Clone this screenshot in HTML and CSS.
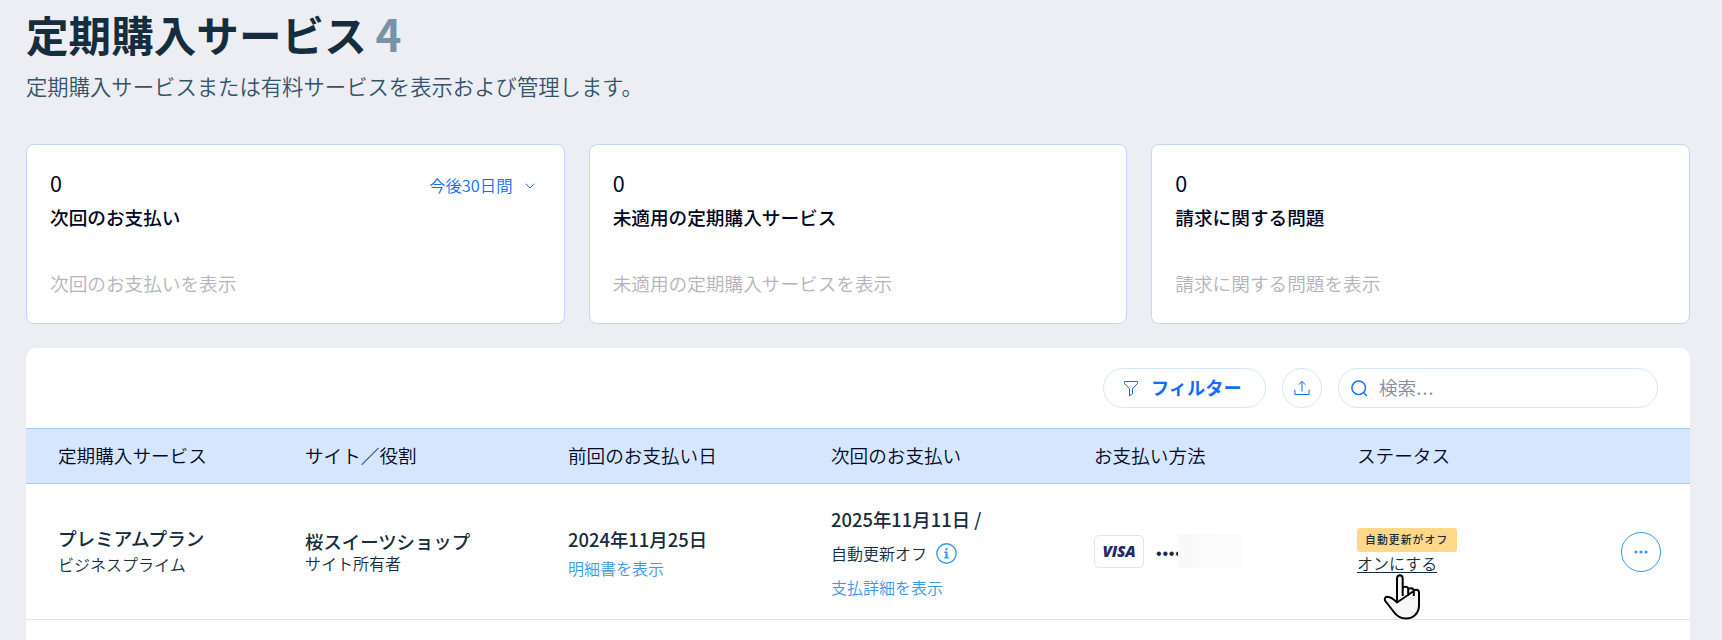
FILE: index.html
```html
<!DOCTYPE html>
<html lang="ja">
<head>
<meta charset="utf-8">
<title>定期購入サービス</title>
<link rel="stylesheet" href="styles.css">
</head>
<body>
<main class="page">
  <header class="page-header">
    <h1 class="title">定期購入サービス <span class="count">4</span></h1>
    <p class="subtitle">定期購入サービスまたは有料サービスを表示および管理します。</p>
  </header>

  <section class="cards">
    <article class="card">
      <div class="card-top">
        <span class="card-value">0</span>
        <button class="period">今後30日間
          <svg width="10" height="6" viewBox="0 0 10 6"><path d="M.7.8 5 5 9.3.8"/></svg>
        </button>
      </div>
      <h2 class="card-title">次回のお支払い</h2>
      <span class="card-link">次回のお支払いを表示</span>
    </article>
    <article class="card">
      <div class="card-top"><span class="card-value">0</span></div>
      <h2 class="card-title">未適用の定期購入サービス</h2>
      <span class="card-link">未適用の定期購入サービスを表示</span>
    </article>
    <article class="card">
      <div class="card-top"><span class="card-value">0</span></div>
      <h2 class="card-title">請求に関する問題</h2>
      <span class="card-link">請求に関する問題を表示</span>
    </article>
  </section>

  <section class="panel">
    <div class="toolbar">
      <button class="filter">
        <svg width="16" height="17" viewBox="0 0 16 17"><path d="M1.500 1.500h13v1.900L9.500 8.800v4.900L6.500 16V8.800L1.500 3.400z"/></svg>
        フィルター
      </button>
      <button class="export">
        <svg width="16" height="16" viewBox="0 0 16 16"><path d="M.9 9.500v5h14.200v-5M8 11.500V1.500M4.800 4.600 8 1.400l3.200 3.200"/></svg>
      </button>
      <div class="search">
        <svg width="17" height="17" viewBox="0 0 17 17"><circle cx="7.700" cy="7.800" r="6.800"/><path d="m12.500 12.600 3.400 3.400"/></svg>
        <span>検索<span class="ellipsis">...</span></span>
      </div>
    </div>

    <div class="grid head">
      <div>定期購入サービス</div>
      <div>サイト／役割</div>
      <div>前回のお支払い日</div>
      <div>次回のお支払い</div>
      <div>お支払い方法</div>
      <div>ステータス</div>
      <div></div>
    </div>

    <div class="grid row">
      <div class="cell plan">
        <strong>プレミアムプラン</strong>
        <span>ビジネスプライム</span>
      </div>
      <div class="cell site">
        <strong>桜スイーツショップ</strong>
        <span>サイト所有者</span>
      </div>
      <div class="cell last">
        <strong>2024年11月25日</strong>
        <a class="link">明細書を表示</a>
      </div>
      <div class="cell next">
        <strong>2025年11月11日 /</strong>
        <span class="renew">自動更新オフ
          <svg width="21" height="21" viewBox="0 0 21 21"><circle cx="10.500" cy="10.500" r="9.700"/><path class="solid" d="M9.300 5.200h2.300v2.100H9.300zM8.200 8.600h3.400v5.600h1.400v1.400H8.200v-1.400h1.300V10H8.200z"/></svg>
        </span>
        <a class="link">支払詳細を表示</a>
      </div>
      <div class="cell pay">
        <span class="visa">VISA</span>
        <span class="dots">••••</span>
        <span class="mask"></span>
      </div>
      <div class="cell status">
        <span class="badge">自動更新がオフ</span>
        <a class="turn-on">オンにする</a>
        <svg class="cursor" width="38" height="46" viewBox="0 0 38 46"><path d="M14 28.500V4.800C14 2.700 15.200 1.300 16.900 1.300S19.700 2.700 19.700 4.800V22M19.700 14.500C20 12.700 24.600 11.500 25.200 14.500V22M25.200 15.500C26 13.500 30.400 13.700 30.800 16.500V22M30.800 17C31.500 15 36 15.200 36 18.500V31.500C36 39.500 30 44.500 23.200 44.500 17.500 44.500 13.500 42 10.500 37.500L2.300 27C1.300 25.300 1.700 22.800 4.200 22.800 8 23 11.500 26 14 28.500Z"/></svg>
      </div>
      <div class="cell more">
        <button class="more-btn">
          <svg width="14" height="4" viewBox="0 0 14 4"><circle cx="2" cy="2" r="1.600"/><circle cx="7" cy="2" r="1.600"/><circle cx="12" cy="2" r="1.600"/></svg>
        </button>
      </div>
    </div>
  </section>
</main>
</body>
</html>
```
FILE: styles.css
```css
* { box-sizing: border-box; }
body {
  margin: 0;
  background: #eceef3;
  color: #162d3d;
  font-family: "Noto Sans CJK JP", sans-serif;
}
button {
  padding: 0;
  border: 0;
  background: none;
  font: inherit;
}
svg { display: block; flex: none; fill: none; stroke: currentColor; }
.page {
  height: 640px;
  padding: 0 32px 0 26px;
  overflow: hidden;
}
.page-header { height: 144px; padding-top: 3px; }
.title {
  margin: 0;
  font-size: 42.6px;
  font-weight: 700;
  line-height: 62px;
  white-space: nowrap;
}
.count { color: #7a92a5; margin-left: -1px; font-size: 44px; line-height: 1; }
.subtitle {
  margin: 6px 0 0;
  color: #32536a;
  font-size: 21.35px;
  font-weight: 350;
  line-height: 30px;
}
.cards {
  display: grid;
  grid-template-columns: repeat(3, 1fr);
  gap: 24px;
  height: 180px;
}
.card {
  padding: 23px 29px 0 23px;
  background: #fff;
  border: 1px solid #c5d5f7;
  border-radius: 8px;
  color: #000624;
}
.card-top {
  display: flex;
  align-items: center;
  justify-content: space-between;
  height: 32px;
}
.card-value { font-size: 21.5px; line-height: 32px; margin-top: -2px; }
.period {
  display: flex;
  align-items: center;
  gap: 12px;
  margin-top: 2px;
  color: #116dff;
  font-size: 16.4px;
  font-weight: 350;
}
.period svg { margin-top: 2px; }
.card-title {
  margin: 2px 0 0;
  font-size: 18.65px;
  font-weight: 500;
  line-height: 30px;
}
.card-link {
  display: block;
  margin-top: 36px;
  color: #b3b4bd;
  font-size: 18.65px;
  font-weight: 350;
  line-height: 30px;
}
.panel {
  height: 320px;
  margin-top: 24px;
  background: #fff;
  border-radius: 10px 10px 0 0;
}
.toolbar {
  display: flex;
  align-items: center;
  justify-content: flex-end;
  gap: 16px;
  height: 80px;
  padding-right: 32px;
}
.filter, .export, .search {
  display: flex;
  align-items: center;
  height: 40px;
  border: 1px solid #d6e6fe;
  border-radius: 20px;
  color: #116dff;
}
.filter {
  width: 163px;
  padding: 0 0 2px 19px;
  gap: 12px;
  font-size: 18.2px;
  font-weight: 700;
}
.filter svg { margin-top: 2px; }
.export { width: 40px; justify-content: center; }
.search {
  width: 320px;
  padding-left: 12px;
  gap: 11px;
}
.search svg { stroke-width: 1.4; }
.search span { margin-top: -3px; color: #868aa5; font-size: 18.6px; font-weight: 350; }
.search .ellipsis { letter-spacing: 1.2px; }
.grid {
  display: grid;
  grid-template-columns: 247px 263px 263px 263px 263px 258px 1fr;
  padding-left: 32px;
}
.head {
  height: 56px;
  align-items: center;
  padding-bottom: 3px;
  background: #d6e6fe;
  border-top: 1px solid #a8caff;
  border-bottom: 1px solid #a8caff;
  color: #000624;
  font-size: 18.6px;
  font-weight: 350;
}
.row { height: 136px; border-bottom: 1px solid #dfe5eb; }
.cell { display: flex; flex-direction: column; align-items: flex-start; }
.cell strong { font-size: 18.4px; font-weight: 500; line-height: 28px; }
.cell span, .link { font-size: 16px; font-weight: 350; line-height: 24px; }
.plan { padding-top: 40px; }
.plan strong { font-size: 18.6px; }
.site { padding-top: 44px; }
.site strong { line-height: 26px; }
.site span { line-height: 19px; }
.last { padding-top: 41px; }
.cell .link { color: #3899ec; }
.last .link { line-height: 30px; }
.next { padding-top: 21px; }
.cell .renew {
  display: flex;
  align-items: center;
  gap: 9px;
  line-height: 40px;
}
.renew svg { color: #3899ec; stroke-width: 1.4; }
.renew .solid { fill: currentColor; stroke: none; }
.next .link { line-height: 28px; }
.pay { flex-direction: row; align-items: flex-start; padding-top: 51px; }
.cell .visa {
  width: 50px;
  height: 33px;
  border: 1px solid #dfe5eb;
  border-radius: 5px;
  color: #26286b;
  font: italic 800 15.5px/31px "Open Sans", sans-serif;
  letter-spacing: -0.2px;
  text-align: center;
}
.cell .dots {
  height: 33px;
  margin-left: 12px;
  font: 400 16px/37px "Liberation Sans", sans-serif;
  letter-spacing: .8px;
}
.mask {
  position: relative;
  width: 64px;
  height: 34px;
  margin: -1px 0 0 -4px;
  background: linear-gradient(90deg, #f9f9fa, #fcfcfc);
}
.status { position: relative; padding-top: 44px; }
.cell .badge {
  height: 24px;
  padding: 0 0 0 8px;
  width: 100px;
  background: #ffd889;
  border-radius: 3px;
  font-size: 10.8px;
  font-weight: 500;
  line-height: 23px;
  letter-spacing: 1.1px;
  white-space: nowrap;
}
.turn-on {
  margin-top: 2px;
  border-bottom: 1px solid #162d3d;
  font-size: 16px;
  font-weight: 350;
  line-height: 18px;
}
.cursor {
  position: absolute;
  top: 90px;
  left: 26px;
  fill: #f7f7f7;
  stroke: #000;
  stroke-width: 2;
  stroke-linejoin: round;
}
.more { padding-top: 48px; }
.more-btn {
  display: flex;
  align-items: center;
  justify-content: center;
  width: 40px;
  height: 40px;
  margin-left: 6px;
  border: 1px solid #3899ec;
  border-radius: 50%;
  color: #3899ec;
}
.more-btn svg { fill: currentColor; stroke: none; }
```
